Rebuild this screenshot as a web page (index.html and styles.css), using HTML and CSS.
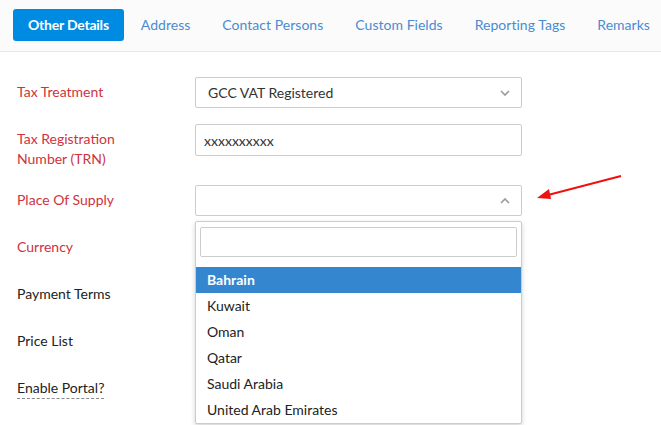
FILE: index.html
```html
<!DOCTYPE html>
<html>
<head>
<meta charset="utf-8">
<link rel="stylesheet" href="styles.css">
</head>
<body>
<div class="tabs">
  <a class="tab active">Other Details</a>
  <a class="tab">Address</a>
  <a class="tab">Contact Persons</a>
  <a class="tab">Custom Fields</a>
  <a class="tab">Reporting Tags</a>
  <a class="tab">Remarks</a>
</div>
<div class="form">
  <div class="row">
    <label class="lbl req">Tax Treatment</label>
    <div class="field select"><span class="val">GCC VAT Registered</span><svg class="chev" width="10" height="6" viewBox="0 0 10 6"><path d="M1 1l4 4 4-4" fill="none" stroke="#999" stroke-width="1.6"/></svg></div>
  </div>
  <div class="row">
    <label class="lbl req">Tax Registration<br>Number (TRN)</label>
    <div class="field input tall"><span class="val">xxxxxxxxxx</span></div>
  </div>
  <div class="row">
    <label class="lbl req">Place Of Supply</label>
    <div class="field select open"><span class="val"></span><svg class="chev" width="10" height="6" viewBox="0 0 10 6"><path d="M1 5l4-4 4 4" fill="none" stroke="#999" stroke-width="1.6"/></svg>
      <div class="dropdown">
        <div class="search"></div>
        <ul class="options">
          <li class="hl">Bahrain</li>
          <li>Kuwait</li>
          <li>Oman</li>
          <li>Qatar</li>
          <li>Saudi Arabia</li>
          <li>United Arab Emirates</li>
        </ul>
      </div>
    </div>
  </div>
  <div class="row">
    <label class="lbl req">Currency</label>
    <div class="field select"></div>
  </div>
  <div class="row">
    <label class="lbl">Payment Terms</label>
    <div class="field select"></div>
  </div>
  <div class="row">
    <label class="lbl">Price List</label>
    <div class="field select"></div>
  </div>
  <div class="row">
    <label class="lbl"><span class="dashed">Enable Portal?</span></label>
    <div class="field plain"></div>
  </div>
  <div class="row">
    <label class="lbl">Portal Language</label>
    <div class="field plain"><span class="val">English</span></div>
  </div>
</div>
<svg class="annot" width="661" height="425" viewBox="0 0 661 425">
  <line x1="621" y1="176" x2="548" y2="195" stroke="#f01010" stroke-width="2"/>
  <path d="M537 198 L549 189 L551 199 Z" fill="#f01010"/>
</svg>
</body>
</html>
```
FILE: styles.css
```css
* { box-sizing: border-box; }
html, body { margin: 0; padding: 0; background: #fff; }
body {
  font-family: Lato, "Open Sans", sans-serif;
  font-size: 14px;
  color: #222;
  width: 661px;
  height: 425px;
  overflow: hidden;
  position: relative;
}
.tabs {
  display: flex;
  align-items: flex-start;
  height: 52px;
  padding: 9px 0 0 13px;
  background: #fbfbfb;
  border-bottom: 1px solid #e6e6e6;
  white-space: nowrap;
}
.tab {
  display: block;
  padding: 0 15px;
  height: 32px;
  line-height: 31px;
  margin-right: 2px;
  color: #4a8bd2;
  font-size: 14px;
  letter-spacing: 0.03px;
  border-radius: 3px;
}
.tab.active {
  background: #008be3;
  color: #fff;
  font-weight: bold;
  letter-spacing: -0.22px;
}
.form {
  padding: 25px 0 0 17px;
}
.row {
  display: flex;
  align-items: flex-start;
  margin-bottom: 16px;
}
.lbl {
  width: 178px;
  padding-top: 5px;
  line-height: 20px;
  font-size: 14px;
  color: #222;
}
.lbl.req { color: #cf3240; }
.dashed { border-bottom: 1px dashed #888; padding-bottom: 2px; }
.field {
  position: relative;
  width: 327px;
  height: 31px;
  border: 1px solid #ccc;
  border-radius: 2px;
  display: flex;
  align-items: center;
  padding: 0 12px;
  color: #333;
  font-size: 14px;
  background: #fff;
}
.field.tall { height: 32px; padding: 0 8px; }
.field.plain { border-color: transparent; }
.chev { position: absolute; right: 11px; top: 12px; }
.dropdown {
  position: absolute;
  left: -1px;
  top: 35px;
  width: 327px;
  background: #fff;
  border: 1px solid #ccc;
  border-radius: 2px;
  box-shadow: 0 2px 5px rgba(0,0,0,0.18);
  padding: 5px 0 0 0;
  z-index: 5;
}
.search {
  margin: 0 4px;
  height: 30px;
  border: 1px solid #ccc;
  border-radius: 2px;
}
.options {
  list-style: none;
  margin: 10px 0 0 0;
  padding: 0;
}
.options li {
  height: 26px;
  line-height: 25px;
  padding-left: 11px;
  color: #222;
  font-size: 14px;
}
.options li.hl {
  background: #3487cf;
  color: #fff;
  font-weight: bold;
}
.annot { position: absolute; left: 0; top: 0; pointer-events: none; z-index: 10; }
```
